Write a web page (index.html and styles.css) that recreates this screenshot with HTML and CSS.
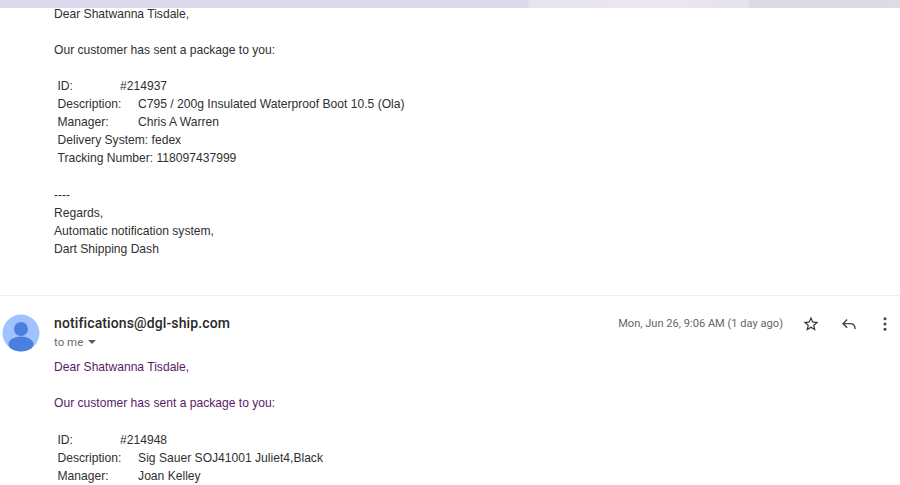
FILE: index.html
```html
<!DOCTYPE html>
<html lang="en">
<head>
<meta charset="utf-8">
<title>Package notifications</title>
<link rel="stylesheet" href="styles.css">
</head>
<body>
<div class="topbar"></div>
<section class="body first">
  <p>Dear Shatwanna Tisdale,</p>
  <p class="gap">Our customer has sent a package to you:</p>
  <div class="details gap">
    <div class="row"><span class="lab-id">ID:</span><span>#214937</span></div>
    <div class="row"><span class="lab">Description:</span><span>C795 / 200g Insulated Waterproof Boot 10.5 (Ola)</span></div>
    <div class="row"><span class="lab">Manager:</span><span>Chris A Warren</span></div>
    <div class="row">Delivery System: fedex</div>
    <div class="row">Tracking Number: 118097437999</div>
  </div>
  <div class="signature">
    <p>----</p>
    <p>Regards,</p>
    <p>Automatic notification system,</p>
    <p>Dart Shipping Dash</p>
  </div>
</section>
<hr class="divider">
<section class="message">
  <svg class="avatar" viewBox="0 0 38 38" width="38" height="38" aria-hidden="true">
    <circle cx="19" cy="19" r="18.5" fill="#a0c3ff"/>
    <circle cx="19" cy="15" r="7" fill="#4a7fe0"/>
    <ellipse cx="19" cy="30" rx="12.5" ry="7.5" fill="#4a7fe0"/>
  </svg>
  <div class="main">
    <header class="head">
      <div class="who">
        <div class="sender">notifications@dgl-ship.com</div>
        <div class="to">to me <span class="caret"></span></div>
      </div>
      <div class="meta">
        <span class="date">Mon, Jun 26, 9:06 AM (1 day ago)</span>
        <svg class="ic star" viewBox="0 0 24 24" width="18" height="18" aria-hidden="true"><path d="M22 9.24l-7.19-.62L12 2 9.19 8.63 2 9.24l5.46 4.73L5.82 21 12 17.27 18.18 21l-1.63-7.03L22 9.24zM12 15.4l-3.76 2.27 1-4.28-3.32-2.88 4.38-.38L12 6.1l1.71 4.04 4.38.38-3.32 2.88 1 4.28L12 15.4z" fill="#333"/></svg>
        <svg class="ic reply" viewBox="0 0 24 24" width="18" height="18" aria-hidden="true"><path d="M9.5 6L4 11.5 9.5 17M4.5 11.5H14c3.5 0 6 2.5 6 7" fill="none" stroke="#444746" stroke-width="1.9"/></svg>
        <svg class="ic more" viewBox="0 0 24 24" width="18" height="18" aria-hidden="true"><circle cx="12" cy="5" r="2" fill="#444746"/><circle cx="12" cy="12" r="2" fill="#444746"/><circle cx="12" cy="19" r="2" fill="#444746"/></svg>
      </div>
    </header>
    <div class="body second">
      <p>Dear Shatwanna Tisdale,</p>
      <p class="gap">Our customer has sent a package to you:</p>
      <div class="details tail">
        <div class="row"><span class="lab-id">ID:</span><span>#214948</span></div>
        <div class="row"><span class="lab">Description:</span><span>Sig Sauer SOJ41001 Juliet4,Black</span></div>
        <div class="row"><span class="lab">Manager:</span><span>Joan Kelley</span></div>
      </div>
    </div>
  </div>
</section>
</body>
</html>
```
FILE: styles.css
```css
html, body { margin: 0; padding: 0; background: #fff; }
body { height: 485px; overflow: hidden; font-family: "Liberation Sans", Arial, sans-serif; font-size: 12.1px; line-height: 18px; color: #303030; }
p { margin: 0; }
.topbar { height: 8px; background: linear-gradient(90deg, #dcd8ec 0, #dcd8ec 528px, #e8e4ef 529px, #ece6ee 680px, #e6e2ea 748px, #dcd9e4 750px, #dedbe6 100%); }
.body { line-height: 18px; }
.first { padding: 0 0 0 54px; margin-top: -3px; }
.gap { margin-top: 18px; }
.signature { margin-top: 19px; }
.details { padding-left: 3.5px; }
.tail { margin-top: 19px; }
.row { display: flex; white-space: pre; }
.lab-id { width: 62.5px; }
.lab { width: 80.6px; }
.divider { border: 0; border-top: 1px solid #efefef; margin: 37px 0 0; }
.message { display: flex; padding-top: 18px; padding-left: 1.5px; }
.avatar { flex: none; margin-right: 14.5px; }
.main { flex: 1; min-width: 0; }
.head { display: flex; justify-content: space-between; align-items: flex-start; height: 44px; }
.sender { font-family: Roboto, "Liberation Sans", sans-serif; font-weight: 500; font-size: 14px; letter-spacing: .12px; line-height: 18px; color: #2a2a2a; }
.to { font-family: Roboto, "Liberation Sans", sans-serif; font-size: 11.5px; line-height: 18px; color: #6b6b6b; margin-top: 1px; }
.caret { display: inline-block; width: 0; height: 0; margin-left: 2px; border: 4px solid transparent; border-top-color: #5e5e5e; border-bottom: 0; vertical-align: 2px; }
.meta { display: flex; align-items: center; height: 18px; margin-top: 1px; }
.date { font-family: Roboto, "Liberation Sans", sans-serif; font-size: 11.1px; color: #666; margin-right: 19px; }
.ic { flex: none; }
.star { margin-right: 20px; }
.more { margin-left: 18px; margin-right: 6px; }
.second { color: #5a1a66; }
.second .details { color: #303030; }
```
